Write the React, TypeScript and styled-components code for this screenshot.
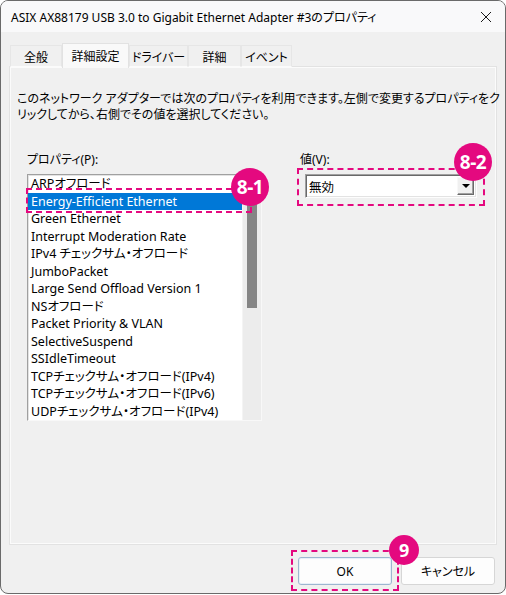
import React from 'react'
import styled, { createGlobalStyle } from 'styled-components'

const GlobalStyle = createGlobalStyle`
  html, body {
    margin: 0;
    padding: 0;
    background: #ffffff;
  }
  body {
    font-family: "Noto Sans", "Noto Sans CJK JP", sans-serif;
    font-size: 12px;
    color: #000;
    font-feature-settings: "palt";
  }
`

const PINK = '#e4097f'

const Window = styled.div`
  box-sizing: border-box;
  width: 506px;
  height: 594px;
  border: 1px solid #6a6a6a;
  border-radius: 8px;
  background: #f0f0f0;
  display: flex;
  flex-direction: column;
  overflow: hidden;
`

const TitleBar = styled.div`
  height: 31px;
  flex: none;
  display: flex;
  align-items: center;
  justify-content: space-between;
  padding: 0 10px 0 10px;
  background: #f9f9fa;
`

const Title = styled.div`
  font-size: 12px;
  white-space: nowrap;
  padding-top: 1px;
`

const CloseButton = styled.div`
  width: 12px;
  height: 12px;
  margin-right: 3px;
  display: flex;
`

const Body = styled.div`
  flex: 1;
  display: flex;
  flex-direction: column;
  padding: 11px 9px 0 9px;
`

const TabStrip = styled.div`
  display: flex;
  align-items: flex-end;
  height: 24px;
  position: relative;
  z-index: 1;
`

const Tab = styled.div<{ $w: number; $active?: boolean }>`
  box-sizing: border-box;
  width: ${p => p.$w}px;
  height: ${p => (p.$active ? 25 : 22)}px;
  margin-bottom: ${p => (p.$active ? -1 : 0)}px;
  display: flex;
  align-items: center;
  justify-content: center;
  white-space: nowrap;
  font-size: 12px;
  background: ${p => (p.$active ? '#f9f9f9' : '#f0f0f0')};
  border: 1px solid ${p => (p.$active ? '#e2e2e2' : '#e6e6e6')};
  border-bottom: ${p => (p.$active ? 'none' : '1px solid #fbfbfb')};
  padding-top: ${p => (p.$active ? 0 : 1)}px;
`

const TabPanel = styled.div`
  box-sizing: border-box;
  height: 477px;
  border: 1px solid #fbfbfb;
  box-shadow: 0 0 0 1px #e2e2e2;
  background: #f0f0f0;
  padding: 23px 6px 0 6px;
  display: flex;
  flex-direction: column;
`

const Description = styled.p`
  margin: 0;
  line-height: 16px;
  white-space: nowrap;
  font-size: 12px;
`

const Columns = styled.div`
  display: flex;
  margin-top: 29px;
  padding-left: 10px;
  gap: 38px;
`

const Column = styled.div`
  display: flex;
  flex-direction: column;
`

const FieldLabel = styled.div`
  font-size: 12px;
  line-height: 16px;
  height: 16px;
  margin-bottom: 6px;
`

const Annotated = styled.div`
  position: relative;
`

const ListBox = styled.div`
  box-sizing: border-box;
  width: 235px;
  height: 247px;
  background: #fff;
  border-style: solid;
  border-width: 1px;
  border-color: #a0a0a0 #f8f8f8 #f8f8f8 #a0a0a0;
  box-shadow: inset 1px 1px 0 #e3e3e3;
  display: flex;
  overflow: hidden;
`

const Items = styled.ul`
  list-style: none;
  margin: 0;
  padding: 0;
  flex: 1;
`

const Item = styled.li<{ $selected?: boolean }>`
  height: 17.5px;
  line-height: 17.5px;
  padding-left: 3px;
  font-size: 12.5px;
  white-space: nowrap;
  background: ${p => (p.$selected ? '#0078d7' : 'transparent')};
  color: ${p => (p.$selected ? '#fff' : '#000')};
`

const ScrollTrack = styled.div`
  width: 18px;
  flex: none;
  background: #ececec;
  border-left: 1px solid #f4f4f4;
  display: flex;
  justify-content: center;
`

const ScrollThumb = styled.div`
  width: 10px;
  height: 133px;
  background: #858585;
`

const Combo = styled.div`
  box-sizing: border-box;
  width: 172px;
  height: 24px;
  margin-left: 5px;
  background: #fff;
  border-style: solid;
  border-width: 1px;
  border-color: #a0a0a0 #fdfdfd #fdfdfd #a0a0a0;
  box-shadow: inset 1px 1px 0 #696969, inset -1px -1px 0 #e3e3e3;
  display: flex;
  align-items: center;
  padding: 0 2px 0 3px;
`

const ComboValue = styled.span`
  flex: 1;
  font-size: 12.5px;
`

const ComboButton = styled.div`
  box-sizing: border-box;
  width: 17px;
  height: 18px;
  background: #f0f0f0;
  border-style: solid;
  border-width: 1px;
  border-color: #f8f8f8 #696969 #696969 #f8f8f8;
  box-shadow: inset -1px -1px 0 #a0a0a0;
  display: flex;
  align-items: center;
  justify-content: center;
`

const Arrow = styled.div`
  width: 0;
  height: 0;
  border-left: 4px solid transparent;
  border-right: 4px solid transparent;
  border-top: 4px solid #000;
`

const DashFrame = styled.div`
  position: absolute;
  border: 2px dashed ${PINK};
  pointer-events: none;
`

const Badge = styled.div<{ $size: number; $font: number }>`
  position: absolute;
  width: ${p => p.$size}px;
  height: ${p => p.$size}px;
  border-radius: 50%;
  background: ${PINK};
  color: #fff;
  font-family: "Noto Sans", "Open Sans", sans-serif;
  font-weight: 700;
  font-size: ${p => p.$font}px;
  display: flex;
  align-items: center;
  justify-content: center;
  letter-spacing: -0.5px;
  z-index: 3;
`

const Footer = styled.div`
  flex: 1;
  display: flex;
  justify-content: flex-end;
  align-items: flex-start;
  gap: 9px;
  padding: 13px 1px 0 0;
`

const Button = styled.button<{ $default?: boolean }>`
  box-sizing: border-box;
  width: 94px;
  height: 28px;
  border-radius: 3px;
  font-family: "Noto Sans", "Noto Sans CJK JP", sans-serif;
  font-feature-settings: "palt";
  font-size: 12px;
  color: #000;
  background: #fdfdfd;
  border: 1px solid ${p => (p.$default ? '#9db6cf' : '#d6d6d6')};
  box-shadow: ${p => (p.$default ? 'inset 0 0 0 1px #e8f0f8' : 'none')};
  padding: 0;
`

const tabs = [
  { label: '全般', w: 52 },
  { label: '詳細設定', w: 67, active: true },
  { label: 'ドライバー', w: 59 },
  { label: '詳細', w: 53 },
  { label: 'イベント', w: 51 },
]

const properties = [
  'ARPオフロード',
  'Energy-Efficient Ethernet',
  'Green Ethernet',
  'Interrupt Moderation Rate',
  'IPv4 チェックサム・オフロード',
  'JumboPacket',
  'Large Send Offload Version 1',
  'NSオフロード',
  'Packet Priority & VLAN',
  'SelectiveSuspend',
  'SSIdleTimeout',
  'TCPチェックサム・オフロード(IPv4)',
  'TCPチェックサム・オフロード(IPv6)',
  'UDPチェックサム・オフロード(IPv4)',
]

export default function App() {
  return (
    <>
      <GlobalStyle />
      <Window>
        <TitleBar>
          <Title>ASIX AX88179 USB 3.0 to Gigabit Ethernet Adapter #3のプロパティ</Title>
          <CloseButton>
            <svg width="12" height="12" viewBox="0 0 12 12">
              <path d="M1 1 L11 11 M11 1 L1 11" stroke="#1a1a1a" strokeWidth="1" fill="none" />
            </svg>
          </CloseButton>
        </TitleBar>
        <Body>
          <TabStrip>
            {tabs.map(t => (
              <Tab key={t.label} $w={t.w} $active={t.active}>
                {t.label}
              </Tab>
            ))}
          </TabStrip>
          <TabPanel>
            <Description>
              このネットワーク アダプターでは次のプロパティを利用できます。左側で変更するプロパティをク
              <br />
              リックしてから、右側でその値を選択してください。
            </Description>
            <Columns>
              <Column>
                <FieldLabel>プロパティ(P):</FieldLabel>
                <Annotated>
                  <ListBox>
                    <Items>
                      {properties.map((p, i) => (
                        <Item key={p} $selected={i === 1}>
                          {p}
                        </Item>
                      ))}
                    </Items>
                    <ScrollTrack>
                      <ScrollThumb />
                    </ScrollTrack>
                  </ListBox>
                  <DashFrame style={{ left: -1, top: 14, width: 222, height: 21 }} />
                  <Badge $size={38} $font={19} style={{ left: 204, top: -6 }}>
                    8-1
                  </Badge>
                </Annotated>
              </Column>
              <Column>
                <FieldLabel>値(V):</FieldLabel>
                <Annotated>
                  <Combo>
                    <ComboValue>無効</ComboValue>
                    <ComboButton>
                      <Arrow />
                    </ComboButton>
                  </Combo>
                  <DashFrame style={{ left: -3, top: -6, width: 184, height: 34 }} />
                  <Badge $size={38} $font={19} style={{ left: 154, top: -31 }}>
                    8-2
                  </Badge>
                </Annotated>
              </Column>
            </Columns>
          </TabPanel>
          <Footer>
            <Annotated>
              <Button $default>OK</Button>
              <DashFrame style={{ left: -7, top: -7, width: 104, height: 37 }} />
              <Badge $size={30} $font={18} style={{ left: 91, top: -22 }}>
                9
              </Badge>
            </Annotated>
            <Button>キャンセル</Button>
          </Footer>
        </Body>
      </Window>
    </>
  )
}
